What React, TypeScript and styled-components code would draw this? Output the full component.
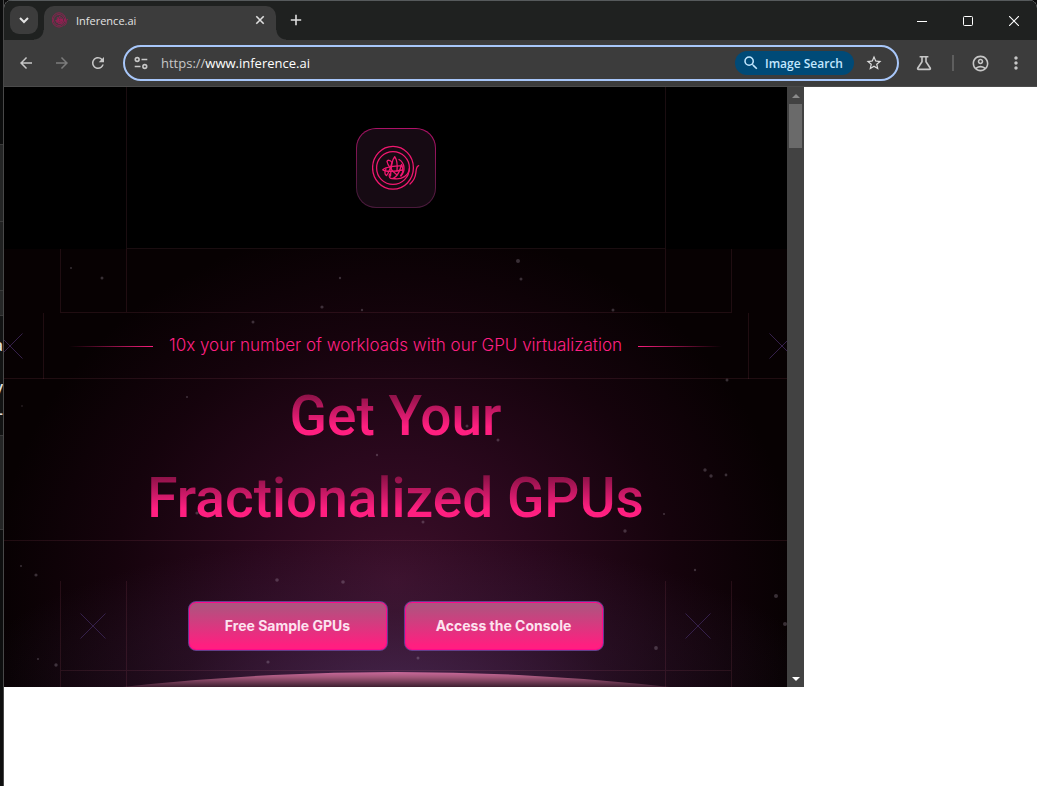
import React from "react";
import styled, { createGlobalStyle, css } from "styled-components";
import {
  MdArrowBack,
  MdArrowForward,
  MdRefresh,
  MdSearch,
  MdStarBorder,
  MdMoreVert,
  MdOutlineAccountCircle,
} from "react-icons/md";

const uiFont = `"Open Sans", "Noto Sans", sans-serif`;
const siteFont = `Inter, "Liberation Sans", sans-serif`;
const rule = "rgba(255, 130, 160, 0.1)";
const chrome = "#3c3c3c";
const strip = "#1f2120";

const GlobalStyle = createGlobalStyle`
  * { box-sizing: border-box; }
  html, body { margin: 0; background: #fff; }
  button, input { font: inherit; color: inherit; border: 0; padding: 0; margin: 0; background: none; }
  button { cursor: pointer; }
  h1, p { margin: 0; }
`;

const Desktop = styled.div`
  display: flex;
  min-height: 100vh;
  background: #0b0b0b;
  font-family: ${uiFont};
`;

/* sliver of the window that lies behind the browser */
const Behind = styled.div`
  width: 4px;
  flex: none;
  display: flex;
  flex-direction: column;
  overflow: hidden;
  border-right: 1px solid #484848;
  background: #0e0f0f;
`;

const BehindBlock = styled.div<{ $h: number; $bg: string }>`
  height: ${(p) => p.$h}px;
  flex: none;
  background: ${(p) => p.$bg};
  border-bottom: 1px solid #3a3a3a;
`;

const BehindText = styled.div`
  flex: none;
  height: 120px;
  display: flex;
  flex-direction: column;
  align-items: flex-end;
  padding-top: 16px;
  background: #121313;
  border-bottom: 1px solid #3a3a3a;
  font-size: 16px;
  font-weight: 600;
  line-height: 26px;
  color: #ddd;
`;

const BehindHeading = styled.span`
  margin-bottom: 16px;
`;

const Window = styled.div`
  flex: 1;
  min-width: 0;
  display: flex;
  flex-direction: column;
  background: #fff;
  border-radius: 8px 8px 0 0;
  overflow: hidden;
`;

const TitleBar = styled.div`
  display: flex;
  align-items: flex-end;
  height: 40px;
  padding-left: 6px;
  background: ${strip};
  border-top: 1px solid #565a5c;
`;

const TabMenu = styled.button`
  width: 28px;
  height: 28px;
  margin-bottom: 6px;
  border-radius: 9px;
  background: ${chrome};
  display: grid;
  place-items: center;
  color: #e3e3e3;
`;

const Tab = styled.div`
  position: relative;
  display: flex;
  align-items: center;
  width: 232px;
  height: 34px;
  margin-left: 6px;
  padding: 0 10px 6px 8px;
  gap: 8px;
  border-radius: 10px 10px 0 0;
  background: ${chrome};
  color: #e3e3e3;
  font-size: 11px;

  &::before,
  &::after {
    content: "";
    position: absolute;
    bottom: 0;
    width: 10px;
    height: 10px;
  }
  &::before {
    left: -10px;
    background: radial-gradient(circle at 0 0, transparent 9px, ${chrome} 10px);
  }
  &::after {
    right: -10px;
    background: radial-gradient(circle at 100% 0, transparent 9px, ${chrome} 10px);
  }
`;

const TabTitle = styled.span`
  flex: 1;
`;

const SmallButton = styled.button<{ $size: number }>`
  width: ${(p) => p.$size}px;
  height: ${(p) => p.$size}px;
  flex: none;
  display: grid;
  place-items: center;
  color: #dedede;
`;

const NewTab = styled(SmallButton)`
  margin: 0 0 6px 6px;
`;

const WindowControls = styled.div`
  display: flex;
  align-self: stretch;
  margin-left: auto;
`;

const WindowButton = styled.button`
  width: 46px;
  display: grid;
  place-items: center;
  color: #fff;
`;

const Toolbar = styled.div`
  display: flex;
  align-items: center;
  height: 47px;
  padding: 0 3px 0 4px;
  background: ${chrome};
  border-bottom: 1px solid #4b4b4b;
  color: #c7c7c7;
`;

const ToolButton = styled.button<{ $dim?: boolean }>`
  width: 36px;
  height: 36px;
  flex: none;
  display: grid;
  place-items: center;
  color: ${(p) => (p.$dim ? "#7c7c7c" : "#c7c7c7")};
`;

const Omnibox = styled.div`
  flex: 1;
  min-width: 0;
  height: 36px;
  display: flex;
  align-items: center;
  margin: 0 7px;
  padding-left: 6px;
  border: 2px solid #a8c7fa;
  border-radius: 18px;
  font-size: 13px;
`;

const Scheme = styled.label`
  margin-left: 10px;
  color: #c7c7c7;
`;

const Address = styled.input`
  flex: 1;
  min-width: 0;
  outline: 0;
  color: #fff;
`;

const SearchChip = styled.button`
  display: flex;
  align-items: center;
  gap: 5px;
  height: 24px;
  padding: 0 11px 0 7px;
  border-radius: 12px;
  background: #004a77;
  color: #c2e7ff;
  font-size: 12px;
  font-weight: 600;
`;

const StarButton = styled(SmallButton)`
  margin: 0 11px 0 8px;
`;

const Divider = styled.span`
  width: 2px;
  height: 16px;
  margin: 0 8px 0 10px;
  background: #5e5e5e;
`;

const Viewport = styled.div`
  display: flex;
  width: 100%;
  max-width: 800px;
  overflow: hidden;
`;

const Site = styled.main`
  flex: 1;
  min-width: 0;
  overflow: hidden;
  background: #000;
  font-family: ${siteFont};
`;

const Scrollbar = styled.div`
  width: 17px;
  flex: none;
  display: flex;
  flex-direction: column;
  align-items: center;
  background: #424242;
`;

const ScrollArrow = styled.button`
  width: 17px;
  height: 17px;
  display: grid;
  place-items: center;
`;

const Thumb = styled.div`
  width: 13px;
  height: 44px;
  margin-bottom: auto;
  background: #6a6a6a;
`;

const Header = styled.header`
  display: flex;
  justify-content: center;
`;

const HeaderCell = styled.div`
  width: 540px;
  height: 162px;
  display: grid;
  place-items: center;
  border: 1px solid ${rule};
  border-top: 0;
`;

const LogoTile = styled.a`
  width: 80px;
  height: 80px;
  display: grid;
  place-items: center;
  border-radius: 20px;
  border: 1px solid transparent;
  background:
    linear-gradient(#160a13, #160a13) padding-box,
    linear-gradient(190deg, #b8116c, #4a1a3c 80%) border-box;
`;

const Hero = styled.section`
  position: relative;
  overflow: hidden;
  background:
    radial-gradient(ellipse 430px 150px at 50% 100%, rgba(80, 52, 100, 0.6), rgba(64, 40, 76, 0.28) 50%, rgba(60, 36, 84, 0) 100%),
    radial-gradient(ellipse 400px 360px at 50% 76%, #3c0f2a 0%, #2a081d 35%, #15030c 70%, rgba(8, 1, 2, 0) 100%),
    #070102;
`;

const Scene = styled.svg`
  position: absolute;
  left: 50%;
  bottom: 0;
  transform: translateX(-50%);
`;

const Layer = styled.div`
  position: relative;
`;

const Row = styled.div<{ $line?: boolean }>`
  display: flex;
  justify-content: center;
  ${(p) =>
    p.$line &&
    css`
      box-shadow: inset 0 -1px ${rule};
    `}
`;

type Edges = { $w: number; $h: number; $left?: boolean; $right?: boolean; $bottom?: boolean };

const Cell = styled.div<Edges>`
  width: ${(p) => p.$w}px;
  height: ${(p) => p.$h}px;
  flex: none;
  display: flex;
  align-items: center;
  justify-content: center;
  gap: 16px;
  border: 0 solid ${rule};
  border-left-width: ${(p) => (p.$left ? 1 : 0)}px;
  border-right-width: ${(p) => (p.$right ? 1 : 0)}px;
  border-bottom-width: ${(p) => (p.$bottom ? 1 : 0)}px;
`;

const Tagline = styled.p`
  padding-bottom: 2px;
  color: #ff2083;
  font-size: 17px;
  font-weight: 300;
  line-height: 24px;
  white-space: nowrap;
`;

const Dash = styled.span<{ $to: "left" | "right" }>`
  width: 84px;
  height: 1px;
  background: linear-gradient(to ${(p) => p.$to}, #f81d7c, transparent);
`;

const Title = styled.h1`
  display: flex;
  flex-direction: column;
  align-items: center;
  margin: -4px 0 2px;
  font-family: Roboto, ${siteFont};
  font-size: 55px;
  font-weight: 500;
  line-height: 82px;
  white-space: nowrap;
`;

const TitleLine = styled.span`
  color: transparent;
  background: linear-gradient(#450a25 0%, #ff1f80 63%);
  background-clip: text;
  -webkit-background-clip: text;
`;

const Gap = styled.div`
  height: 40px;
`;

const CallToAction = styled.button`
  width: 200px;
  height: 50px;
  border: 1px solid #643f8c;
  border-radius: 8px;
  background: linear-gradient(#a8587f, #ff1f80 90%);
  box-shadow: inset 0 0 0 1px #ff0a8c;
  color: #fde3ef;
  font-size: 14px;
  font-weight: 700;
`;

const ChevronIcon = () => (
  <svg width="12" height="12" viewBox="0 0 12 12" fill="none" stroke="currentColor" strokeWidth="2">
    <path d="M2 4l4 4 4-4" />
  </svg>
);

const CloseIcon = () => (
  <svg width="10" height="10" viewBox="0 0 10 10" fill="none" stroke="currentColor" strokeWidth="1.6">
    <path d="M1.3 1.3l7.4 7.4M8.7 1.3L1.3 8.7" />
  </svg>
);

const PlusIcon = () => (
  <svg width="12" height="12" viewBox="0 0 12 12" fill="none" stroke="currentColor" strokeWidth="1.6">
    <path d="M6 .8v10.4M.8 6h10.4" />
  </svg>
);

const SiteControlsIcon = () => (
  <svg width="18" height="18" viewBox="0 0 18 18" fill="none" stroke="#c7c7c7" strokeWidth="1.6">
    <circle cx="5.2" cy="5.5" r="1.9" />
    <path d="M9.5 5.5h5.8M2.7 12.5h5.8" />
    <circle cx="12.8" cy="12.5" r="1.9" />
  </svg>
);

const FlaskIcon = () => (
  <svg width="18" height="18" viewBox="0 0 18 18" fill="none" stroke="currentColor" strokeWidth="1.6">
    <path d="M4.6 2.8h8.8M7 2.8v5L2.7 14.2q-.4 1.2.8 1.2h11q1.2 0 .8-1.2L11 7.8v-5" />
  </svg>
);

const LogoMark = ({ size, dim }: { size: number; dim?: boolean }) => (
  <svg
    width={size}
    height={size}
    viewBox="0 0 48 48"
    fill="none"
    stroke={dim ? "#a01c56" : "#f0186f"}
    strokeWidth={dim ? 2.4 : 1.3}
    strokeLinecap="round"
    strokeLinejoin="round"
  >
    <circle cx="21" cy="24" r="16.4" />
    <ellipse cx="21" cy="23.8" rx="20.4" ry="21.4" />
    <path d="M38 40C41.500 37 43.400 33 43.800 29C44.300 26 44 22.500 46.700 21.700" />
    <path d="M18.500 32C19 24 20.500 15 22.700 12.700C25 16 25.500 22 25 27" />
    <path d="M25 31C20 27 15.500 21 15 17.500C15.500 15.500 18.500 16 20 18.500C18.500 23 17 29 14.500 31.500C12.500 31 12.500 27.500 14 25" />
    <path d="M30 22C24 21.500 14 23 10.700 25.700C13 28 23 27.500 30.500 26" />
    <path d="M17.500 30C16.500 33 18 35 21 34.500C24.500 33 28 27 29.500 20.500C31.500 25 31 29 28.700 31.500" />
    <path d="M27 15.500C33 19 33.500 27 29 32" />
    <path d="M21 34.500C30 36.500 37 31 37.500 24" />
  </svg>
);

const Cross = () => (
  <svg width="26" height="26" viewBox="0 0 26 26" stroke="#35204a" strokeWidth="1" aria-hidden="true">
    <path d="M.5 .5l25 25M25.5 .5l-25 25" />
  </svg>
);

const stars: [number, number, number][] = [
  [67, 19, 1], [98, 29, 1.5], [336, 29, 1.2], [318, 58, 1.6], [358, 61, 1.2], [249, 73, 1.5],
  [514, 12, 2], [517, 30, 1.5], [609, 61, 1.5], [723, 131, 1.5], [18, 157, 0.8], [183, 148, 1],
  [373, 206, 1.2], [193, 264, 1.6], [17, 317, 1], [32, 326, 1.6], [273, 331, 1.8], [339, 333, 1.8],
  [34, 410, 1], [52, 416, 1.7], [264, 413, 1.6], [463, 177, 1.5], [494, 191, 1.5], [701, 221, 1.7],
  [707, 227, 1.7], [722, 226, 1.4], [419, 273, 1.5], [621, 282, 1.7], [660, 265, 1.1], [691, 321, 1.2],
  [772, 347, 2], [781, 375, 2], [652, 399, 1.9], [414, 409, 1.5],
];

const Starfield = () => (
  <Scene width="784" height="438" viewBox="0 0 784 438" aria-hidden="true">
    <defs>
      <linearGradient id="planet" x1="0" y1="423" x2="0" y2="438" gradientUnits="userSpaceOnUse">
        <stop offset="0" stopColor="#c9699a" />
        <stop offset="0.35" stopColor="#a25679" />
        <stop offset="1" stopColor="#3d1f30" />
      </linearGradient>
    </defs>
    {stars.map(([x, y, r]) => (
      <circle key={`${x}-${y}`} cx={x} cy={y} r={r} fill="#cfc4d4" opacity="0.24" />
    ))}
    <ellipse cx="392" cy="2923" rx="2500" ry="2500" fill="url(#planet)" />
  </Scene>
);

export default function App() {
  return (
    <>
      <GlobalStyle />
      <Desktop>
        <Behind aria-hidden="true">
          <BehindBlock $h={145} $bg="#0c0d0d" />
          <BehindBlock $h={77} $bg="#242525" />
          <BehindBlock $h={69} $bg="#202121" />
          <BehindBlock $h={25} $bg="#262727" />
          <BehindText>
            <BehindHeading>a</BehindHeading>
            <span>y</span>
            <span>-</span>
          </BehindText>
          <BehindBlock $h={94} $bg="#252626" />
        </Behind>
        <Window>
          <TitleBar>
            <TabMenu aria-label="Search tabs">
              <ChevronIcon />
            </TabMenu>
            <Tab>
              <LogoMark size={16} dim />
              <TabTitle>Inference.ai</TabTitle>
              <SmallButton $size={12} aria-label="Close tab">
                <CloseIcon />
              </SmallButton>
            </Tab>
            <NewTab $size={28} aria-label="New tab">
              <PlusIcon />
            </NewTab>
            <WindowControls>
              <WindowButton aria-label="Minimize">
                <svg width="10" height="10" viewBox="0 0 10 10" stroke="currentColor">
                  <path d="M0 5.5h10" />
                </svg>
              </WindowButton>
              <WindowButton aria-label="Maximize">
                <svg width="10" height="10" viewBox="0 0 10 10" fill="none" stroke="currentColor">
                  <rect x=".5" y=".5" width="9" height="9" rx="1" />
                </svg>
              </WindowButton>
              <WindowButton aria-label="Close">
                <svg width="10" height="10" viewBox="0 0 10 10" stroke="currentColor" strokeWidth="1.1">
                  <path d="M0 0l10 10M10 0L0 10" />
                </svg>
              </WindowButton>
            </WindowControls>
          </TitleBar>
          <Toolbar>
            <ToolButton aria-label="Back">
              <MdArrowBack size={18} />
            </ToolButton>
            <ToolButton $dim aria-label="Forward">
              <MdArrowForward size={18} />
            </ToolButton>
            <ToolButton aria-label="Reload">
              <MdRefresh size={18} />
            </ToolButton>
            <Omnibox>
              <SmallButton $size={20} aria-label="View site information">
                <SiteControlsIcon />
              </SmallButton>
              <Scheme htmlFor="address">https://</Scheme>
              <Address id="address" defaultValue="www.inference.ai" />
              <SearchChip>
                <MdSearch size={18} />
                Image Search
              </SearchChip>
              <StarButton $size={24} aria-label="Bookmark this tab">
                <MdStarBorder size={18} />
              </StarButton>
            </Omnibox>
            <ToolButton aria-label="Labs">
              <FlaskIcon />
            </ToolButton>
            <Divider />
            <ToolButton aria-label="Profile">
              <MdOutlineAccountCircle size={19} />
            </ToolButton>
            <ToolButton aria-label="Menu">
              <MdMoreVert size={20} />
            </ToolButton>
          </Toolbar>
          <Viewport>
            <Site>
              <Header>
                <HeaderCell>
                  <LogoTile href="#" aria-label="Inference.ai">
                    <LogoMark size={48} />
                  </LogoTile>
                </HeaderCell>
              </Header>
              <Hero>
                <Starfield />
                <Layer>
                  <Row>
                    <Cell $w={66} $h={64} $left $bottom />
                    <Cell $w={540} $h={64} $left $right $bottom />
                    <Cell $w={66} $h={64} $right $bottom />
                  </Row>
                  <Row $line>
                    <Cell $w={66} $h={66}>
                      <Cross />
                    </Cell>
                    <Cell $w={706} $h={66} $left $right>
                      <Dash $to="left" />
                      <Tagline>10x your number of workloads with our GPU virtualization</Tagline>
                      <Dash $to="right" />
                    </Cell>
                    <Cell $w={66} $h={66}>
                      <Cross />
                    </Cell>
                  </Row>
                  <Row $line>
                    <Title>
                      <TitleLine>Get Your</TitleLine>
                      <TitleLine>Fractionalized GPUs</TitleLine>
                    </Title>
                  </Row>
                  <Gap />
                  <Row>
                    <Cell $w={66} $h={90} $left $bottom>
                      <Cross />
                    </Cell>
                    <Cell $w={540} $h={90} $left $right $bottom>
                      <CallToAction>Free Sample GPUs</CallToAction>
                      <CallToAction>Access the Console</CallToAction>
                    </Cell>
                    <Cell $w={66} $h={90} $right $bottom>
                      <Cross />
                    </Cell>
                  </Row>
                  <Row>
                    <Cell $w={66} $h={16} $left />
                    <Cell $w={540} $h={16} $left $right />
                    <Cell $w={66} $h={16} $right />
                  </Row>
                </Layer>
              </Hero>
            </Site>
            <Scrollbar>
              <ScrollArrow aria-label="Scroll up">
                <svg width="8" height="4" viewBox="0 0 8 4" fill="#8a8a8a">
                  <path d="M4 0l4 4H0z" />
                </svg>
              </ScrollArrow>
              <Thumb />
              <ScrollArrow aria-label="Scroll down">
                <svg width="8" height="4" viewBox="0 0 8 4" fill="#fff">
                  <path d="M0 0h8L4 4z" />
                </svg>
              </ScrollArrow>
            </Scrollbar>
          </Viewport>
        </Window>
      </Desktop>
    </>
  );
}
